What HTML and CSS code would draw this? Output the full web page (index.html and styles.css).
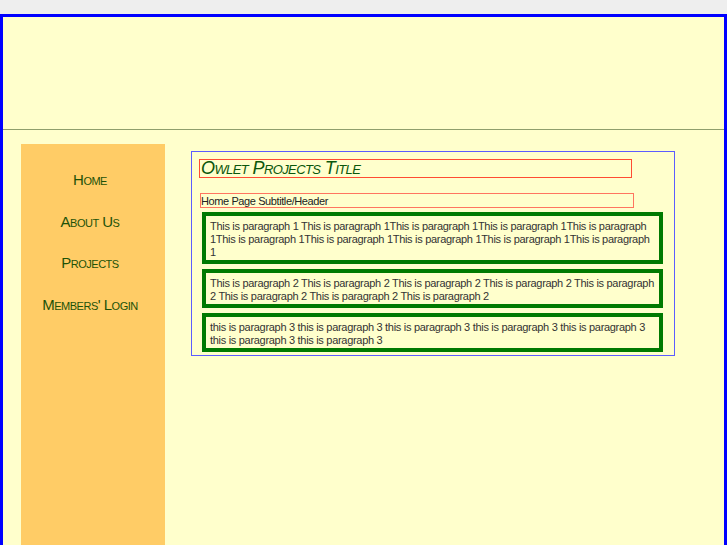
FILE: index.html
```html
<!DOCTYPE html>
<html>
<head>
<meta charset="utf-8">
<title>Owlet Projects</title>
<link rel="stylesheet" href="styles.css">
</head>
<body>
<div class="page">
  <div class="header"></div>
  <div class="main">
    <div class="sidebar">
      <ul class="nav">
        <li><a href="#">Home</a></li>
        <li><a href="#">About Us</a></li>
        <li><a href="#">Projects</a></li>
        <li><a href="#">Members' Login</a></li>
      </ul>
    </div>
    <div class="content">
      <h1 class="title">Owlet Projects Title</h1>
      <h2 class="subtitle">Home Page Subtitle/Header</h2>
      <p class="para">This is paragraph 1 This is paragraph 1This is paragraph 1This is paragraph 1This is paragraph 1This is paragraph 1This is paragraph 1This is paragraph 1This is paragraph 1This is paragraph 1</p>
      <p class="para">This is paragraph 2 This is paragraph 2 This is paragraph 2 This is paragraph 2 This is paragraph 2 This is paragraph 2 This is paragraph 2 This is paragraph 2</p>
      <p class="para">this is paragraph 3 this is paragraph 3 this is paragraph 3 this is paragraph 3 this is paragraph 3 this is paragraph 3 this is paragraph 3</p>
    </div>
  </div>
</div>
</body>
</html>
```
FILE: styles.css
```css
html, body {
  margin: 0;
  padding: 0;
}
body {
  background: #eeeeee;
  padding-top: 14px;
  font-family: "Liberation Sans", Arial, sans-serif;
}
.page {
  background: #ffffcc;
  border: 3px solid #0000ff;
  border-bottom: none;
  height: 528px;
  overflow: hidden;
}
.header {
  height: 112px;
  border-bottom: 1px solid #8f9f6c;
}
.main {
  display: flex;
  align-items: flex-start;
  padding-top: 14px;
}
.sidebar {
  margin-left: 18px;
  width: 144px;
  height: 420px;
  background: #ffcc66;
  padding-right: 6px;
  box-sizing: border-box;
}
.nav {
  list-style: none;
  margin: 0;
  padding: 27px 0 0 0;
  text-align: center;
}
.nav li {
  font-size: 15px;
  line-height: 18px;
  margin-bottom: 23.7px;
  font-variant: small-caps;
  letter-spacing: -0.5px;
}
.nav a {
  color: #1d5208;
  text-decoration: none;
}
.content {
  margin-left: 26px;
  margin-top: 7px;
  width: 482px;
  border: 1px solid #5c5cff;
  padding: 7px 0 3px 0;
}
.title {
  margin: 0 0 0 7px;
  width: 430px;
  border: 1px solid #ff4c33;
  font-size: 18px;
  line-height: 17px;
  font-weight: normal;
  font-style: italic;
  font-variant: small-caps;
  letter-spacing: -0.6px;
  color: #0b560b;
  padding: 0 0 0 1px;
}
.subtitle {
  margin: 15px 0 0 8px;
  width: 432px;
  border: 1px solid #ff7560;
  font-size: 11px;
  line-height: 13px;
  font-weight: normal;
  letter-spacing: -0.4px;
  color: #222222;
  padding: 1px 0 0 0;
  height: 12px;
}
.para {
  margin: 4px 0 0 10px;
  box-sizing: border-box;
  width: 461px;
  border: 4px solid #007a00;
  padding: 4px 4px 1px 4px;
  font-size: 11px;
  line-height: 13px;
  letter-spacing: -0.3px;
  color: #333333;
}
.para + .para {
  margin-top: 5px;
}
```
